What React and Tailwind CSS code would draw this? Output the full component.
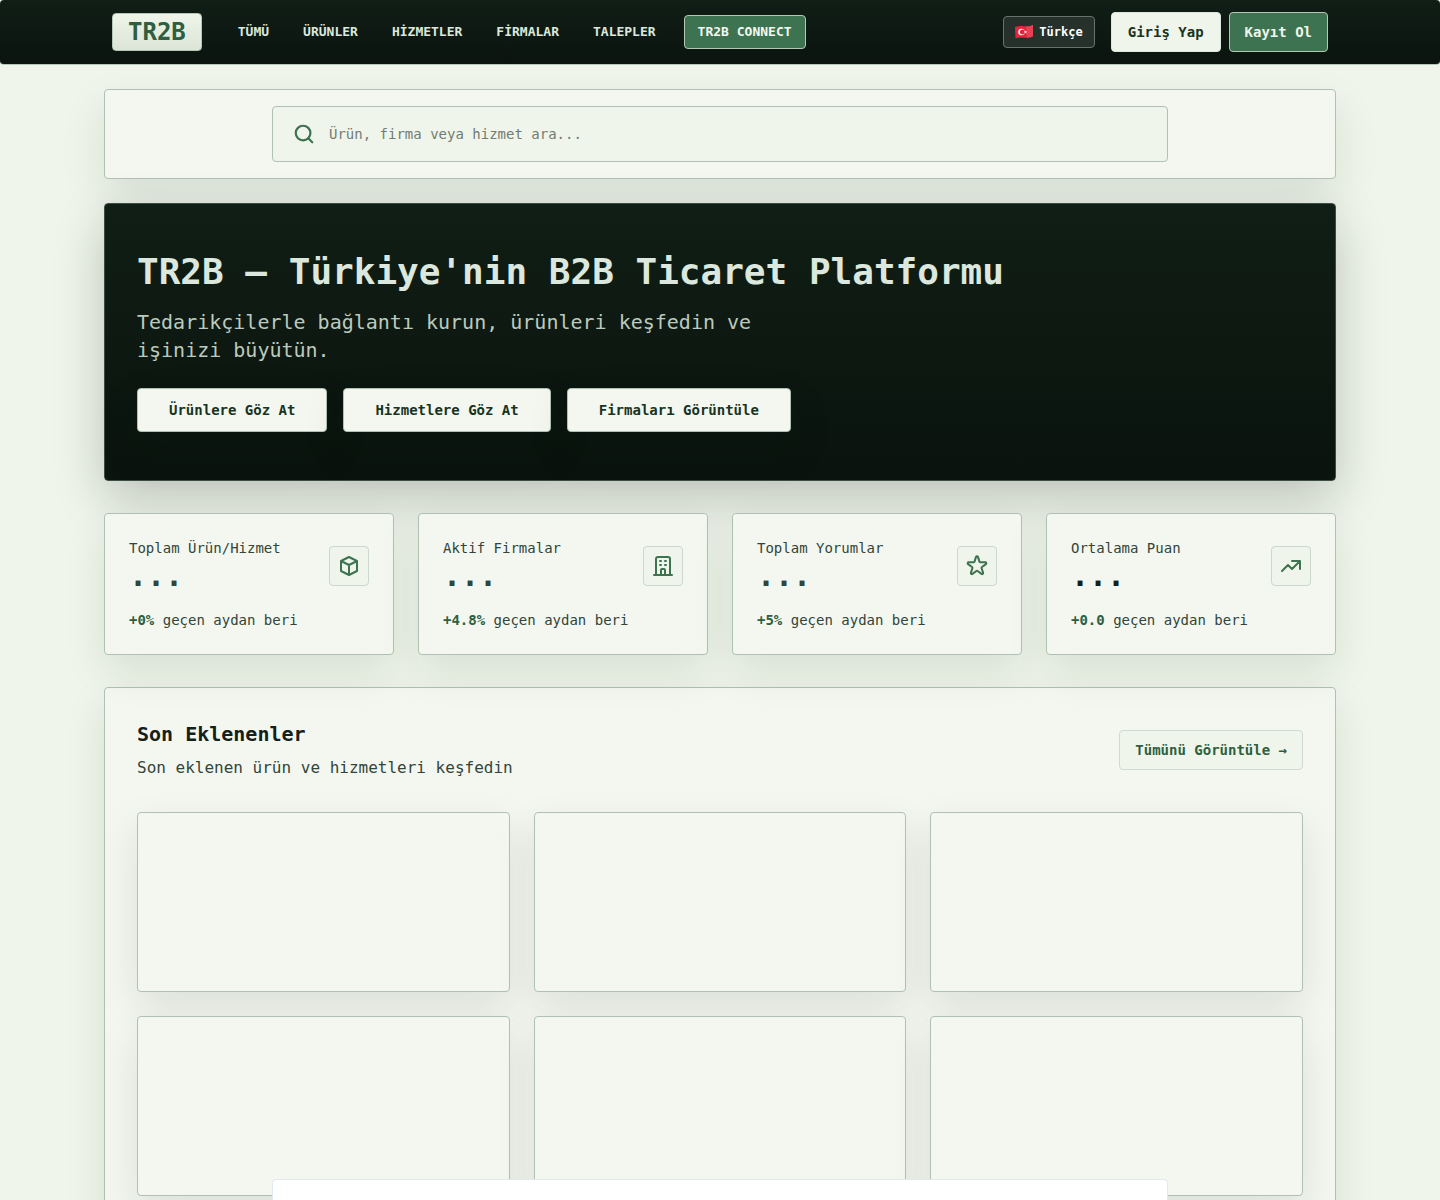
import { Search } from "lucide-react";
import {
    HiOutlineCube,
    HiOutlineOfficeBuilding,
    HiOutlineStar,
    HiOutlineTrendingUp,
} from "react-icons/hi";

const navLinks = ["TÜMÜ", "ÜRÜNLER", "HİZMETLER", "FİRMALAR", "TALEPLER"];

const heroLinks = ["Ürünlere Göz At", "Hizmetlere Göz At", "Firmaları Görüntüle"];

const stats = [
    { label: "Toplam Ürün/Hizmet", change: "+0%", icon: HiOutlineCube, valueColor: "text-[#31453a]" },
    { label: "Aktif Firmalar", change: "+4.8%", icon: HiOutlineOfficeBuilding, valueColor: "text-[#31453a]" },
    { label: "Toplam Yorumlar", change: "+5%", icon: HiOutlineStar, valueColor: "text-[#31453a]" },
    { label: "Ortalama Puan", change: "+0.0", icon: HiOutlineTrendingUp, valueColor: "text-[#14211a]" },
];

const TurkishFlag = () => (
    <svg viewBox="0 0 36 28" className="h-[14px] w-[18px]" aria-hidden="true">
        <path
            d="M0 4c6-2.500 12-2 18-1.500s12 .5 18-3v23c-6 3-12 3.500-18 3s-12-1-17 1.500z"
            fill="#e0283c"
        />
        <path d="M22 3c5 0 10-.5 14-3.500v23c-4 2-8 3-12 3.200z" fill="#ee5260" opacity="0.6" />
        <circle cx="13" cy="14" r="6.500" fill="#fff" />
        <circle cx="14.800" cy="14" r="5" fill="#e0283c" />
        <path
            d="M21 10.800l.9 2.200 2.300.2-1.800 1.500.6 2.300-2-1.300-2 1.300.6-2.300-1.800-1.500 2.300-.2z"
            fill="#fff"
        />
    </svg>
);

const Header = () => (
    <header className="rounded border-b border-[#b4c8b5] bg-linear-to-b from-[#101e16] to-[#0b140f]">
        <div className="mx-auto flex h-16 max-w-7xl items-center justify-between px-8">
            <div className="flex items-center">
                <a
                    href="#"
                    className="rounded border border-[#b4c8b5] bg-linear-to-b from-[#eff5ea] to-[#dbe5d8] px-[15px] py-0.5 text-2xl font-bold text-[#2d5f40]"
                >
                    TR2B
                </a>
                <nav className="ml-6 flex items-center gap-[10px] text-[13px] font-bold">
                    {navLinks.map((link) => (
                        <a key={link} href="#" className="px-3 text-[#dce8dd]">
                            {link}
                        </a>
                    ))}
                    <a
                        href="#"
                        className="ml-1.5 rounded border border-[#b4c8b5] bg-[#3d7350] px-[13px] py-1.5 leading-5 text-[#f4f7f0]"
                    >
                        TR2B CONNECT
                    </a>
                </nav>
            </div>

            <div className="flex items-center gap-2 text-sm font-bold">
                <button className="mr-2 flex h-8 items-center gap-1.5 rounded border border-[#66736a] bg-[#26312b] px-[11px] text-xs text-white">
                    <TurkishFlag />
                    <span>Türkçe</span>
                </button>
                <button className="h-10 rounded border border-[#dbe8db] bg-[#eff5ea] px-4 text-[#173322]">
                    Giriş Yap
                </button>
                <button className="h-10 rounded border border-[#b4c8b5] bg-[#3d7350] px-[15px] text-[#eff5ea]">
                    Kayıt Ol
                </button>
            </div>
        </div>
    </header>
);

const SearchBar = () => (
    <section className="rounded border border-[#afc2b2] bg-[#f4f7f0] p-4 shadow-[0_18px_45px_rgba(12,26,18,0.1)]">
        <label className="mx-auto flex h-14 max-w-4xl items-center gap-[14px] rounded border border-[#afc2b2] bg-[#eff5ea] px-5">
            <Search size={22} strokeWidth={2.4} className="shrink-0 text-[#3d7350]" />
            <input
                type="text"
                aria-label="Ara"
                placeholder="Ürün, firma veya hizmet ara..."
                className="min-w-0 flex-1 bg-transparent text-sm outline-none placeholder:text-[#737c73]"
            />
        </label>
    </section>
);

const Hero = () => (
    <section className="mt-6 rounded border border-[#3c4d42] bg-linear-to-b from-[#101e15] to-[#0a130e] px-8 py-12 shadow-[0_18px_50px_rgba(12,20,15,0.22)]">
        <h1 className="mb-4 text-4xl font-bold text-[#dce8dd]">
            TR2B — Türkiye'nin B2B Ticaret Platformu
        </h1>
        <p className="mb-6 max-w-2xl text-xl leading-7 text-[#bccabe]">
            Tedarikçilerle bağlantı kurun, ürünleri keşfedin ve işinizi büyütün.
        </p>
        <div className="flex flex-wrap gap-4">
            {heroLinks.map((link) => (
                <a
                    key={link}
                    href="#"
                    className="flex h-11 items-center rounded border border-[#afc2b2] bg-[#f4f7f0] px-[31px] text-sm font-bold text-[#173322] shadow-[0_18px_45px_rgba(5,30,15,0.12)]"
                >
                    {link}
                </a>
            ))}
        </div>
    </section>
);

const StatCard = ({ label, change, icon: Icon, valueColor }) => (
    <div className="rounded border border-[#afc2b2] bg-[#f4f7f0] p-6 text-sm text-[#31453a] shadow-[0_16px_40px_rgba(12,26,18,0.1)]">
        <div className="flex items-center justify-between">
            <div>
                <p>{label}</p>
                <p className={`text-3xl font-bold ${valueColor}`}>...</p>
            </div>
            <div className="flex size-10 items-center justify-center rounded border border-[#cbd8cb] bg-[#eff5ea] text-[#3d7350]">
                <Icon size={24} />
            </div>
        </div>
        <p className="mt-4">
            <span className="font-bold text-[#2d5f40]">{change}</span> geçen aydan beri
        </p>
    </div>
);

const RecentItems = () => (
    <section className="mt-8 rounded border border-[#afc2b2] bg-[#f4f7f0] p-8 shadow-[0_16px_40px_rgba(12,26,18,0.1)]">
        <div className="mb-8 flex items-center justify-between">
            <div>
                <h2 className="text-xl leading-7 font-bold text-[#14211a]">Son Eklenenler</h2>
                <p className="mt-2 text-[#31453a]">Son eklenen ürün ve hizmetleri keşfedin</p>
            </div>
            <a
                href="#"
                className="flex h-10 items-center rounded border border-[#cedbd0] bg-[#eff5ea] px-[15px] text-sm font-bold text-[#2d5f40]"
            >
                Tümünü Görüntüle →
            </a>
        </div>
        <div className="grid grid-cols-3 gap-6">
            {[...Array(6)].map((_, index) => (
                <div
                    key={index}
                    className="h-[180px] rounded border border-[#afc2b2] bg-[#f4f7f0] shadow-[0_16px_40px_rgba(12,26,18,0.1)]"
                />
            ))}
        </div>
    </section>
);

const App = () => {
    return (
        <div className="min-h-screen bg-[#eff5ea] font-['DejaVu_Sans_Mono',monospace]">
            <Header />
            <main className="mx-auto max-w-7xl px-6 py-6">
                <SearchBar />
                <Hero />
                <div className="mt-8 grid grid-cols-4 gap-6">
                    {stats.map((stat) => (
                        <StatCard key={stat.label} {...stat} />
                    ))}
                </div>
                <RecentItems />
            </main>
            {/* Bottom sheet peeking in from the edge of the window */}
            <div className="fixed inset-x-0 bottom-0 flex justify-center">
                <div className="h-[21px] w-full max-w-4xl rounded-t border border-b-0 border-slate-200 bg-white" />
            </div>
        </div>
    );
};

export default App;
